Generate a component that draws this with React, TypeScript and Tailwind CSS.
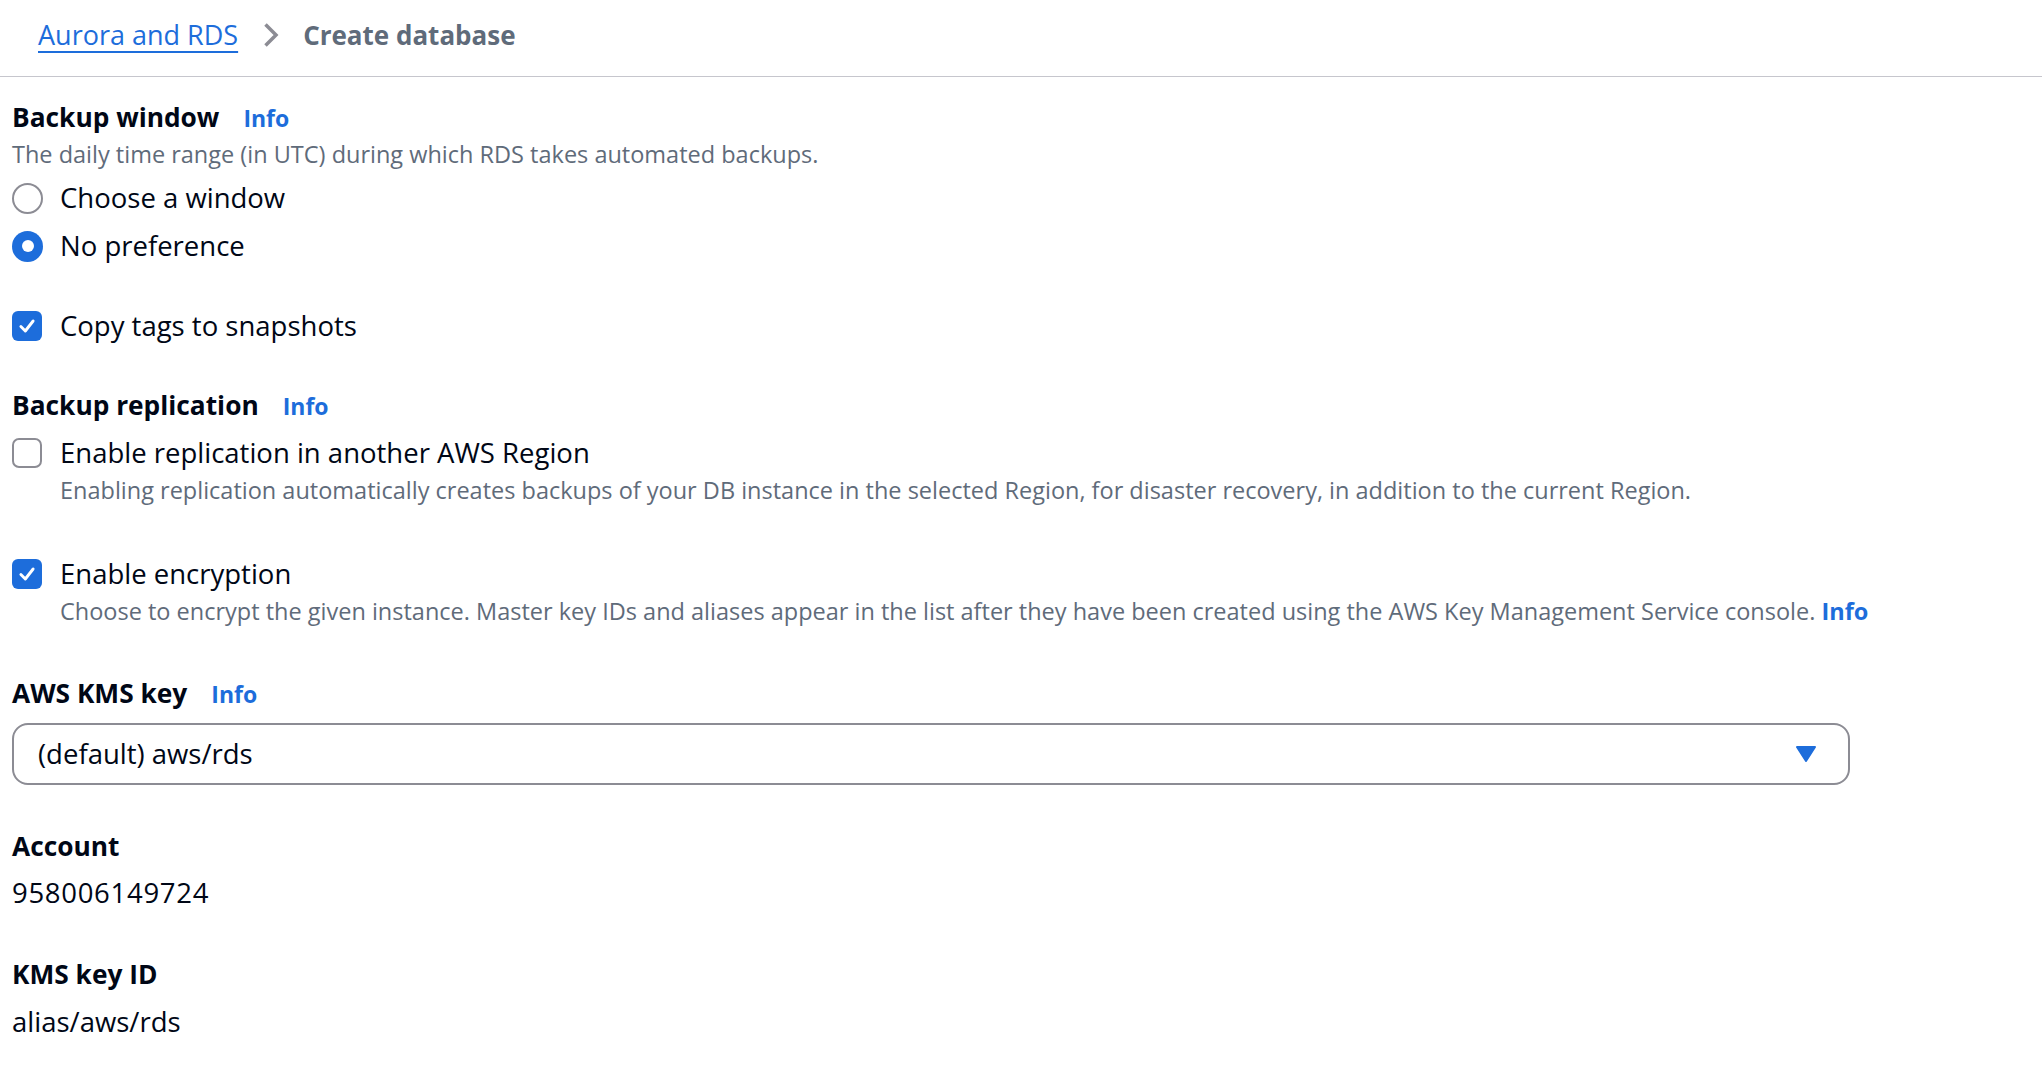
import React from "react";

const BLUE = "#1d6ddb";

const Info = () => (
  <a className="ml-[24px] text-[23px] font-bold text-[#1d6ddb] cursor-pointer">Info</a>
);

const Radio: React.FC<{ checked?: boolean; label: string }> = ({ checked, label }) => (
  <label className="flex items-center h-[48px] cursor-pointer">
    {checked ? (
      <span className="w-[31px] h-[31px] rounded-full bg-[#1d6ddb] flex items-center justify-center">
        <span className="w-[12px] h-[12px] rounded-full bg-white" />
      </span>
    ) : (
      <span className="w-[31px] h-[31px] rounded-full border-2 border-[#8c8c94] bg-white" />
    )}
    <span className="ml-[17px] text-[27.5px] text-[#000716]">{label}</span>
  </label>
);

const Checkbox: React.FC<{ checked?: boolean }> = ({ checked }) =>
  checked ? (
    <span className="w-[30px] h-[30px] rounded-[6px] bg-[#1d6ddb] flex items-center justify-center shrink-0">
      <svg width="20" height="20" viewBox="0 0 18 18" fill="none">
        <path d="M3.5 9.5 L7.5 13.5 L14.5 4.5" stroke="white" strokeWidth="2.6" strokeLinecap="round" strokeLinejoin="round" />
      </svg>
    </span>
  ) : (
    <span className="w-[30px] h-[30px] rounded-[7px] border-2 border-[#8c8c94] bg-white shrink-0" />
  );

const App: React.FC = () => {
  return (
    <div className="min-h-screen w-full bg-white text-[#000716]" style={{ fontFamily: "'Open Sans', sans-serif" }}>
      {/* Breadcrumb */}
      <header className="h-[77px] border-b border-[#c6c6cd] pl-[38px] pt-[14px]">
        <nav className="flex items-center h-[42px]">
          <a className="text-[27px] text-[#1d6ddb] underline underline-offset-[6px] decoration-2">Aurora and RDS</a>
          <svg className="ml-[25px]" width="16" height="26" viewBox="0 0 16 26" fill="none">
            <path d="M2.5 2.5 L13 13 L2.5 23.5" stroke="#8c8c94" strokeWidth="3.5" />
          </svg>
          <span className="ml-[24px] text-[26px] font-bold text-[#5f6b7a]">Create database</span>
        </nav>
      </header>

      <main className="pl-[12px]">
        {/* Backup window */}
        <div className="mt-[23px] flex items-center h-[36px]">
          <span className="text-[26.3px] font-bold">Backup window</span>
          <Info />
        </div>
        <p className="h-[36px] leading-[36px] text-[23.5px] text-[#5f6b7a]">
          The daily time range (in UTC) during which RDS takes automated backups.
        </p>
        <div className="mt-[2px] flex flex-col">
          <Radio label="Choose a window" />
          <Radio checked label="No preference" />
        </div>

        <label className="mt-[32px] flex items-center h-[48px]">
          <Checkbox checked />
          <span className="ml-[18px] text-[27.5px]">Copy tags to snapshots</span>
        </label>

        {/* Backup replication */}
        <div className="mt-[38px] flex items-center h-[36px]">
          <span className="text-[26.3px] font-bold">Backup replication</span>
          <Info />
        </div>
        <label className="mt-[10px] flex items-center h-[38px]">
          <Checkbox />
          <span className="ml-[18px] text-[27.5px]">Enable replication in another AWS Region</span>
        </label>
        <p className="pl-[48px] h-[36px] leading-[36px] text-[23.5px] text-[#5f6b7a]">
          Enabling replication automatically creates backups of your DB instance in the selected Region, for disaster recovery, in addition to the current Region.
        </p>

        {/* Encryption */}
        <label className="mt-[47px] flex items-center h-[38px]">
          <Checkbox checked />
          <span className="ml-[18px] text-[27.5px]">Enable encryption</span>
        </label>
        <p className="pl-[48px] h-[36px] leading-[36px] text-[23.5px] text-[#5f6b7a]">
          Choose to encrypt the given instance. Master key IDs and aliases appear in the list after they have been created using the AWS Key Management Service console.{" "}
          <a className="font-bold text-[#1d6ddb]">Info</a>
        </p>

        <div className="mt-[47px] flex items-center h-[36px]">
          <span className="text-[26.3px] font-bold">AWS KMS key</span>
          <Info />
        </div>
        <button className="mt-[11px] w-[1838px] h-[62px] rounded-[16px] border-2 border-[#8c8c94] flex items-center justify-between pl-[24px] pr-[32px] text-left">
          <span className="text-[27.5px]">(default) aws/rds</span>
          <svg width="20" height="16" viewBox="0 0 20 16">
            <path d="M1 1 H19 L10 15 Z" fill={BLUE} stroke={BLUE} strokeWidth="2" strokeLinejoin="round" />
          </svg>
        </button>

        <div className="mt-[43px] h-[36px] leading-[36px] text-[26.3px] font-bold">Account</div>
        <div className="mt-[11px] h-[36px] leading-[36px] text-[27.5px] tracking-[0.7px]">958006149724</div>

        <div className="mt-[45px] h-[36px] leading-[36px] text-[26.3px] font-bold">KMS key ID</div>
        <div className="mt-[12px] h-[36px] leading-[36px] text-[27.5px]">alias/aws/rds</div>
      </main>
    </div>
  );
};

export default App;
